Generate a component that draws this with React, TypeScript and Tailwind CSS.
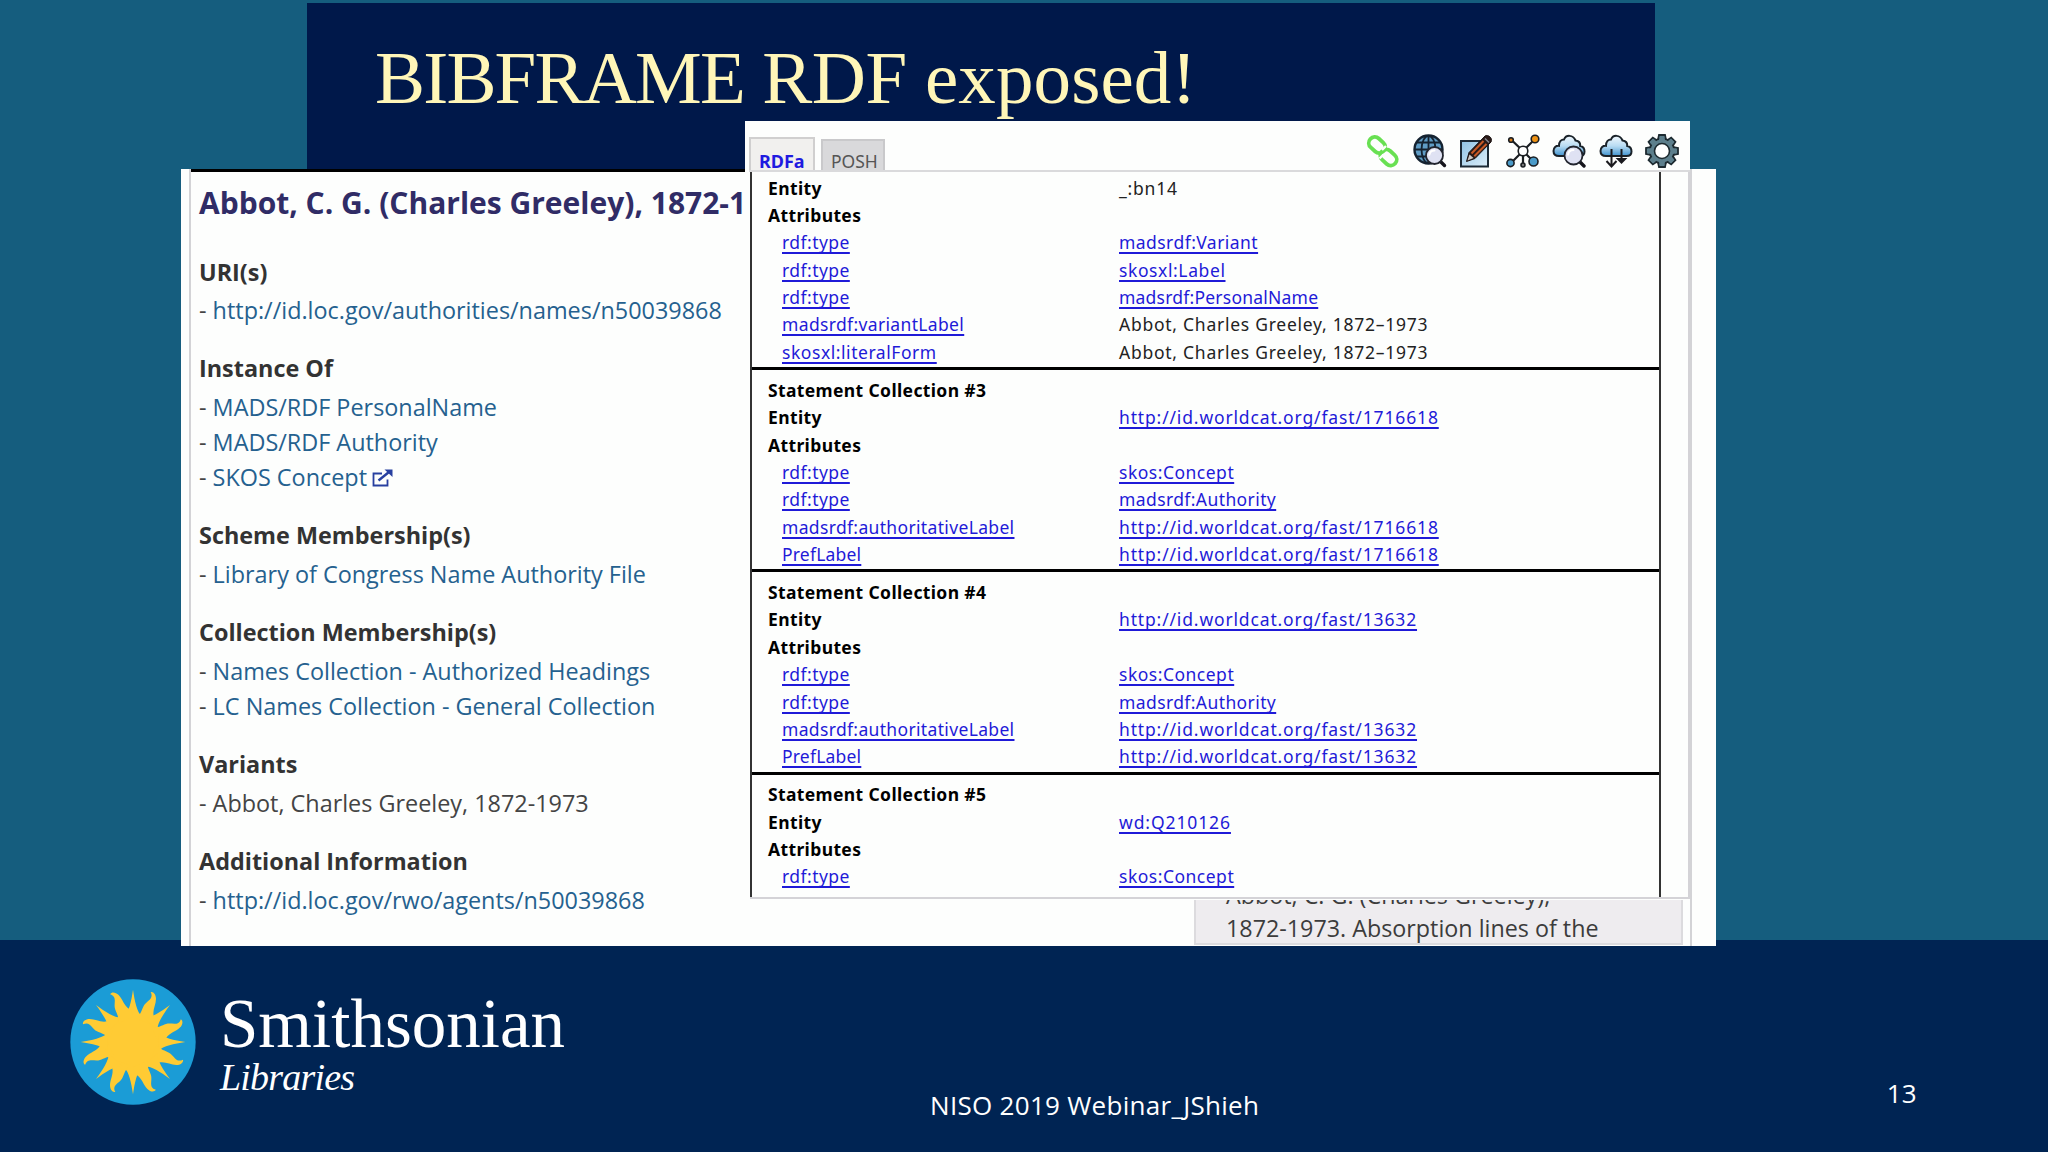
import React from 'react';

type Cell = { text: string; link?: boolean; tracking?: string };
type Row = { label: Cell; value?: Cell };

const TYPE: Cell = { text: 'rdf:type', link: true, tracking: 'tracking-[0.45px]' };
const AUTH_LABEL: Cell = { text: 'madsrdf:authoritativeLabel', link: true, tracking: 'tracking-[0.34px]' };
const PREF_LABEL: Cell = { text: 'PrefLabel', link: true, tracking: 'tracking-[0.2px]' };
const CONCEPT: Cell = { text: 'skos:Concept', link: true, tracking: 'tracking-[0.5px]' };
const AUTHORITY: Cell = { text: 'madsrdf:Authority', link: true, tracking: 'tracking-[0.4px]' };
const NAME: Cell = { text: 'Abbot, Charles Greeley, 1872–1973', tracking: 'tracking-[0.74px]' };

const worldcat = (id: string): Cell => ({
  text: `http://id.worldcat.org/fast/${id}`,
  link: true,
  tracking: 'tracking-[0.85px]',
});

const COLLECTIONS: { title?: string; entity: Cell; rows: Row[] }[] = [
  {
    entity: { text: '_:bn14', tracking: 'tracking-[0.8px]' },
    rows: [
      { label: TYPE, value: { text: 'madsrdf:Variant', link: true, tracking: 'tracking-[0.45px]' } },
      { label: TYPE, value: { text: 'skosxl:Label', link: true, tracking: 'tracking-[0.6px]' } },
      { label: TYPE, value: { text: 'madsrdf:PersonalName', link: true, tracking: 'tracking-[0.22px]' } },
      { label: { text: 'madsrdf:variantLabel', link: true, tracking: 'tracking-[0.35px]' }, value: NAME },
      { label: { text: 'skosxl:literalForm', link: true, tracking: 'tracking-[0.55px]' }, value: NAME },
    ],
  },
  {
    title: 'Statement Collection #3',
    entity: worldcat('1716618'),
    rows: [
      { label: TYPE, value: CONCEPT },
      { label: TYPE, value: AUTHORITY },
      { label: AUTH_LABEL, value: worldcat('1716618') },
      { label: PREF_LABEL, value: worldcat('1716618') },
    ],
  },
  {
    title: 'Statement Collection #4',
    entity: worldcat('13632'),
    rows: [
      { label: TYPE, value: CONCEPT },
      { label: TYPE, value: AUTHORITY },
      { label: AUTH_LABEL, value: worldcat('13632') },
      { label: PREF_LABEL, value: worldcat('13632') },
    ],
  },
  {
    title: 'Statement Collection #5',
    entity: { text: 'wd:Q210126', link: true, tracking: 'tracking-[0.9px]' },
    rows: [
      { label: TYPE, value: CONCEPT },
      { label: TYPE, value: AUTHORITY },
    ],
  },
];

const SECTIONS: { title: string; items: string[]; plain?: boolean }[] = [
  { title: 'URI(s)', items: ['http://id.loc.gov/authorities/names/n50039868'] },
  { title: 'Instance Of', items: ['MADS/RDF PersonalName', 'MADS/RDF Authority', 'SKOS Concept'] },
  { title: 'Scheme Membership(s)', items: ['Library of Congress Name Authority File'] },
  {
    title: 'Collection Membership(s)',
    items: ['Names Collection - Authorized Headings', 'LC Names Collection - General Collection'],
  },
  { title: 'Variants', items: ['Abbot, Charles Greeley, 1872-1973'], plain: true },
  { title: 'Additional Information', items: ['http://id.loc.gov/rwo/agents/n50039868'] },
];

function ExternalIcon() {
  return (
    <svg viewBox="0 0 21 18" className="ml-[5px] w-[21px] h-[18px] mt-[1px]" fill="none" stroke="#2840a0">
      <path d="M10 4.500H1.500V16.500H15.500V10.500" strokeWidth="1.800" />
      <path d="M6.500 11.500 17 3" strokeWidth="2.400" />
      <path d="M12.500 0.500H20.500V8Z" fill="#2840a0" stroke="none" />
    </svg>
  );
}

const TURNS = [0, 45, 90, 135, 180, 225, 270, 315];

// Eight straight rays with eight flame-shaped ones between them
function Sun() {
  return (
    <svg viewBox="-189 -189 378 378" className="w-[126px] h-[126px]">
      <circle r="188" fill="#1b9cd6" />
      <g fill="#ffcb34">
        <circle r="87" />
        {TURNS.map(a => (
          <g key={a} transform={`rotate(${a})`}>
            <path d="M-26-76C-12-92-5-122 0-157C5-122 12-92 26-76Z" />
            <path d="M10-70C24-84 26-96 32-108C40-124 64-128 53-150C62-152 69-142 69-130C69-112 58-98 62-78C64-70 60-60 52-54Z" />
          </g>
        ))}
      </g>
    </svg>
  );
}

const ICON = 'w-[34px] h-[34px] shrink-0';

function Magnifier({ x, y, r }: { x: number; y: number; r: number }) {
  return (
    <g transform={`translate(${x} ${y})`}>
      <path d={`M${r * 0.7} ${r * 0.7}L${r + 1.5} ${r + 1.5}`} stroke="#15151c" strokeWidth="3.400" strokeLinecap="round" />
      <circle r={r} fill="#dfe2f3" stroke="#22252e" strokeWidth="1.800" />
      <path d={`M${-r * 0.6} ${-r * 0.1}A${r * 0.6} ${r * 0.6} 0 0 1 0 ${-r * 0.6}`} fill="none" stroke="#fff" strokeWidth="2" strokeLinecap="round" />
    </g>
  );
}

const CLOUD = 'M7 22C3 22 1.500 19.500 1.500 17C1.500 13.500 4 11.500 7 11.800C7 7.500 9.500 5.500 12 5.500C14 0.500 21 0.500 23.500 6.500C27 7 28.500 9 28.200 12C31.500 12.500 32.500 15 32.500 17.500C32.500 20.500 30.500 22 27.500 22Z';

function Toolbar() {
  return (
    <div className="flex gap-[12.500px]">
      <svg viewBox="0 0 34 34" className={ICON} fill="none">
        <rect x="-9" y="-6" width="18" height="12" rx="6" transform="translate(11 11) rotate(42)" stroke="#68e052" strokeWidth="3.800" />
        <rect x="-9" y="-6" width="18" height="12" rx="6" transform="translate(22.500 23.500) rotate(42)" stroke="#68e052" strokeWidth="3.800" />
        <path d="M20 12 16 16M17.500 20.500 13.500 24.500" stroke="#fdfefd" strokeWidth="2.400" />
      </svg>
      <svg viewBox="0 0 34 34" className={ICON} fill="none">
        <circle cx="15.500" cy="15.500" r="14" fill="#5f9cc5" stroke="#142230" strokeWidth="2.400" />
        <path d="M15.500 2V29M2 15.500H29M4 8.500H27M4 22.500H27" stroke="#142230" strokeWidth="1.800" />
        <ellipse cx="15.500" cy="15.500" rx="7" ry="13.500" stroke="#142230" strokeWidth="1.800" />
        <Magnifier x={21.500} y={21.500} r={8.500} />
      </svg>
      <svg viewBox="0 0 34 34" className={ICON}>
        <defs>
          <linearGradient id="sheet" x1="0" y1="0" x2="1" y2="1">
            <stop offset="0" stopColor="#8fc3e4" />
            <stop offset="1" stopColor="#dceefa" />
          </linearGradient>
        </defs>
        <rect x="2" y="7" width="27" height="25.500" fill="url(#sheet)" stroke="#1c2a36" strokeWidth="2" />
        <path d="M7.500 27.500 10 18.500 26 2C29 0 34 4 32 8L16 24.500Z" fill="#2a1a18" stroke="#1b1414" strokeLinejoin="round" />
        <path d="M12.500 19.500 24.500 7M15.300 22.300 27.500 10" stroke="#c85a26" strokeWidth="2" />
        <path d="M8.500 26.500 10.500 20.500 14.500 24Z" fill="#cfc9c4" />
        <path d="M26 4.500 30 8.500" stroke="#8a8a92" strokeWidth="1.400" />
      </svg>
      <svg viewBox="0 0 34 34" className={ICON} stroke="#1a1e22">
        <path d="M17 17 5.500 6M17 17 29 5M17 17 5 29M17 17 28 28M17 17V30" strokeWidth="2.200" />
        <g strokeWidth="1.600">
          <circle cx="17" cy="17" r="4.800" fill="#fff" />
          <circle cx="5" cy="6" r="2.300" fill="#d67a16" />
          <circle cx="29" cy="5" r="3.800" fill="#ee9214" />
          <circle cx="4.500" cy="29" r="3.600" fill="#4b9bc9" />
          <circle cx="27.500" cy="27.500" r="4.500" fill="#4b9bc9" />
          <circle cx="17" cy="31" r="2" fill="#777" />
        </g>
      </svg>
      <svg viewBox="0 0 34 34" className={ICON}>
        <defs>
          <linearGradient id="cloud" x1="0" y1="0" x2="0" y2="1">
            <stop offset="0" stopColor="#f1f8fd" />
            <stop offset="0.500" stopColor="#b9dcf3" />
            <stop offset="1" stopColor="#3f93cf" />
          </linearGradient>
        </defs>
        <path d={CLOUD} fill="url(#cloud)" stroke="#1a2229" strokeWidth="2" />
        <Magnifier x={21.500} y={21.500} r={9} />
      </svg>
      <svg viewBox="0 0 34 34" className={ICON}>
        <path d={CLOUD} fill="url(#cloud)" stroke="#1a2229" strokeWidth="2" />
        <g stroke="#1a1a1e" strokeWidth="2" fill="none">
          <path d="M12.500 15V32M7.500 27 12.500 32.500 17.500 27" />
          <path d="M22.500 15V26" />
          <path d="M19 25H26L22.500 28.500Z" fill="#1a1a1e" />
        </g>
      </svg>
      <svg viewBox="-17 -17 34 34" className={ICON}>
        <g fill="#5d7f8c" stroke="#1d2a30" strokeWidth="1.800">
          {TURNS.map(a => (
            <path key={a} transform={`rotate(${a})`} d="M-4.200-10 -3-16H3L4.200-10" />
          ))}
          <circle r="12.300" />
        </g>
        <g fill="#5d7f8c">
          {TURNS.map(a => (
            <path key={a} transform={`rotate(${a})`} d="M-3.100-10.500 -2.200-15H2.200L3.100-10.500Z" />
          ))}
        </g>
        <circle r="7.500" fill="#fff" stroke="#1d2a30" strokeWidth="1.600" />
      </svg>
    </div>
  );
}

function Text({ cell }: { cell: Cell }) {
  return (
    <span
      className={`${cell.tracking ?? ''} ${
        cell.link ? 'text-[#1f1ad8] underline decoration-[1.5px] underline-offset-[3px] [text-decoration-skip-ink:none]' : 'text-[#222]'
      }`}
    >
      {cell.text}
    </span>
  );
}

function Line({ children, value, indent }: { children: React.ReactNode; value?: Cell; indent?: boolean }) {
  return (
    <div className="flex h-[27.400px]">
      <div className={indent ? 'w-[367px] pl-[30px]' : 'w-[367px] pl-4 font-bold text-black tracking-[0.370px]'}>{children}</div>
      {value && <Text cell={value} />}
    </div>
  );
}

function RdfWindow() {
  return (
    <div className="absolute left-[745px] top-[121px] w-[945px] h-[779px] bg-[#fdfefd] flex flex-col font-['Noto_Sans',sans-serif] text-[17.500px] leading-[27.400px] whitespace-nowrap">
      <div className="flex items-end h-[51px] ml-[4px] border-b-2 border-[#dadadc] shrink-0">
        <div className="w-[66px] h-[33px] pl-[8px] pt-[7px] bg-[#f1f0ee] border-2 border-b-0 border-[#d0cfcf] font-bold text-[#1f1ae0] text-[18px] leading-[30px]">RDFa</div>
        <div className="w-[64px] h-[31px] ml-[6px] pl-[8px] pt-[5px] bg-[#d9d9db] border-2 border-b-0 border-[#c9c9cb] text-[#555] leading-[30px]">POSH</div>
        <div className="ml-auto mr-[11px] mb-[2px]">
          <Toolbar />
        </div>
      </div>
      <div className="h-[727px] ml-[5px] border-r-2 border-b-2 border-[#d4d3d7] overflow-hidden">
        <div className="w-[911px] h-full border-x-2 border-[#333] overflow-hidden pt-[2.500px]">
          {COLLECTIONS.map((c, i) => (
            <div key={i} className={c.title ? 'border-t-3 border-black pt-[6.500px] pb-px' : 'pb-px'}>
              {c.title && <Line>{c.title}</Line>}
              <Line value={c.entity}>Entity</Line>
              <Line>Attributes</Line>
              {c.rows.map((r, j) => (
                <Line key={j} value={r.value} indent>
                  <Text cell={r.label} />
                </Line>
              ))}
            </div>
          ))}
        </div>
      </div>
    </div>
  );
}

function AuthorityPage() {
  return (
    <div className="absolute left-[181px] top-[169px] w-[1535px] h-[777px] bg-[#fdfefd] pl-[8px] pr-[24px] font-['Open_Sans',sans-serif] text-[23.400px] leading-[35px] whitespace-nowrap">
      <div className="h-full border-x-2 border-[#d3d3d6] flex justify-between">
        <div className="w-[555px] border-t-3 border-black pl-[8px] pt-[10px]">
          <h2 className="text-[30px] leading-[42px] font-bold text-[#302c66]">Abbot, C. G. (Charles Greeley), 1872-1</h2>
          <div className="flex flex-col gap-[23.300px] pt-[30.500px]">
            {SECTIONS.map(s => (
              <section key={s.title}>
                <h3 className="font-bold text-[#333] mb-[3.600px]">{s.title}</h3>
                {s.items.map(item => (
                  <div key={item} className="flex items-center text-[#444]">
                    <span className="whitespace-pre">- </span>
                    <span className={s.plain ? 'text-[#444]' : 'text-[#25618f]'}>{item}</span>
                    {item === 'SKOS Concept' && <ExternalIcon />}
                  </div>
                ))}
              </section>
            ))}
          </div>
        </div>
        <div className="flex-1 border-t-3 border-black flex justify-end items-end pb-px pr-[7px]">
          {/* first line of the citation runs up under the RDF window */}
          <aside className="w-[489px] h-[76px] pl-[30px] pt-[8px] bg-[#eeecef] border-2 border-[#dcdbde] text-[#3c3c3c] text-[23.300px] leading-[33px]">
            <p>Abbot, C. G. (Charles Greeley),</p>
            <p>1872-1973. Absorption lines of the</p>
          </aside>
        </div>
      </div>
    </div>
  );
}

export default function App() {
  return (
    <div className="relative w-[2048px] h-[1152px] overflow-hidden flex flex-col bg-[#155d7e]">
      <header className="ml-[307px] mt-[3px] w-[1348px] h-[300px] bg-[#00184a] pl-[68px] pt-[33px]">
        <h1 className="font-['Liberation_Serif',serif] text-[75px] leading-[84px] tracking-[-0.500px] text-[#fff6b8]">
          <span className="tracking-[-1.800px]">BIBFRAME</span> RDF <span className="tracking-[0.100px]">exposed!</span>
        </h1>
      </header>

      <footer className="mt-auto h-[212px] bg-[#002453] text-white flex items-start font-['Open_Sans',sans-serif] text-[26px] leading-[36px] tracking-[0.300px]">
        <div className="ml-[70px] mt-[39px]">
          <Sun />
        </div>
        <div className="ml-[24px] mt-[49px] w-[710px] font-['Liberation_Serif',serif] tracking-normal">
          <div className="text-[69px] leading-[70px]">Smithsonian</div>
          <div className="text-[38px] leading-[44px] mt-[-4px] italic tracking-[-0.800px]">Libraries</div>
        </div>
        <div className="mt-[147px]">NISO 2019 Webinar_JShieh</div>
        <div className="ml-auto mr-[131px] mt-[135px]">13</div>
      </footer>

      <AuthorityPage />
      <RdfWindow />
    </div>
  );
}
